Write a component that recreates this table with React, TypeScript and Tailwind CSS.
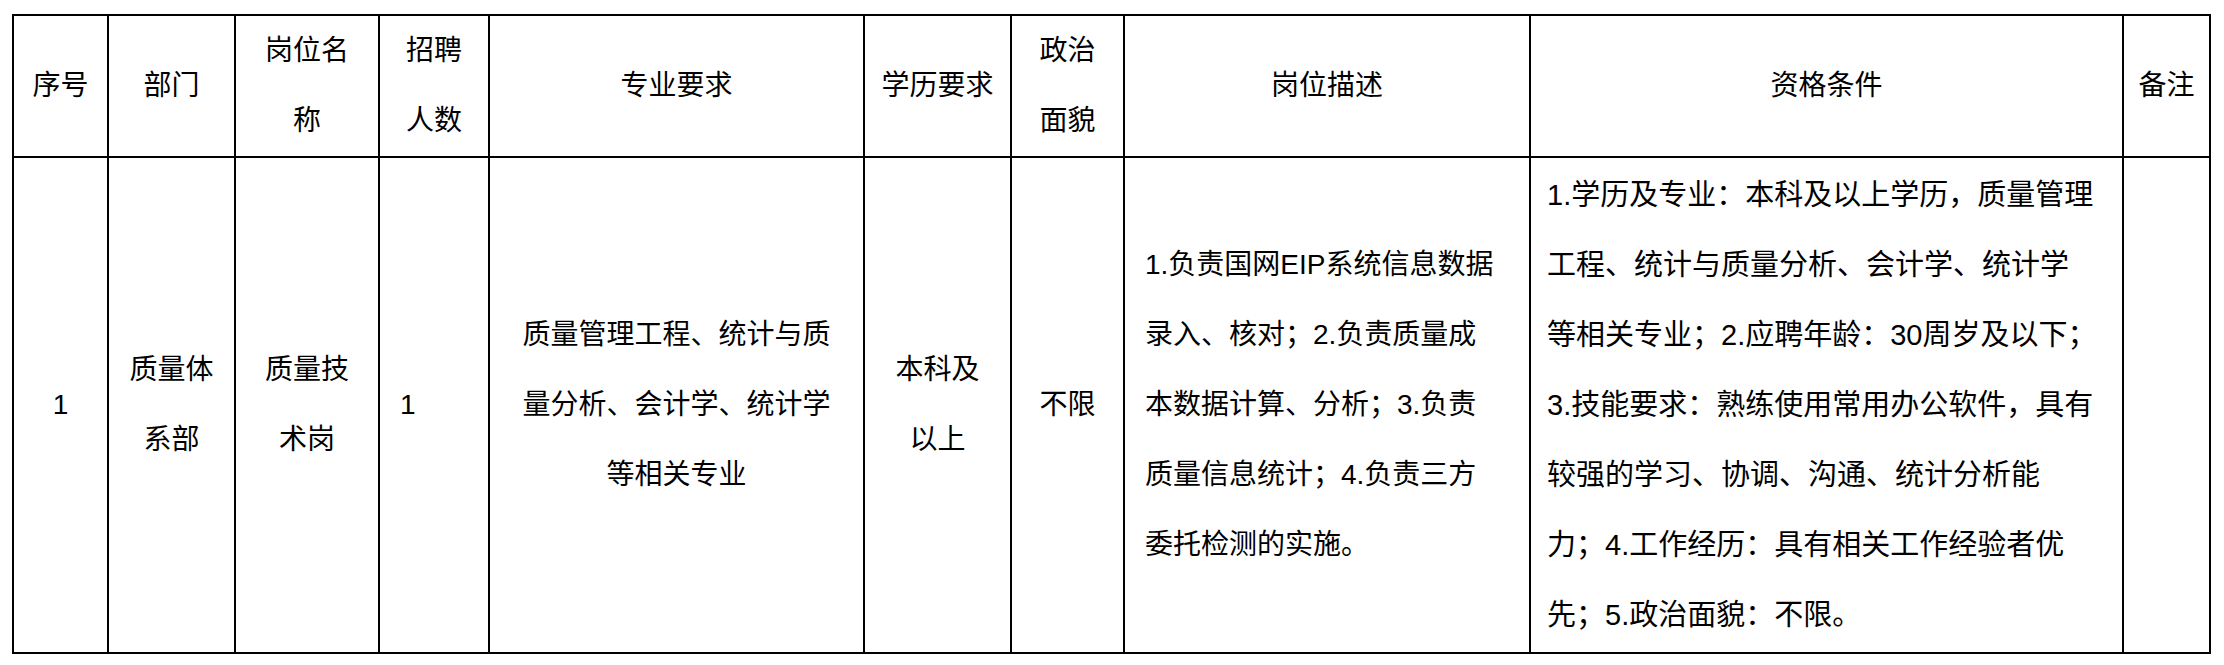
import React from 'react';

const font = { fontFamily: '"Liberation Sans", "Noto Sans CJK SC", sans-serif' };

const duties = [
  '1.负责国网EIP系统信息数据',
  '录入、核对；2.负责质量成',
  '本数据计算、分析；3.负责',
  '质量信息统计；4.负责三方',
  '委托检测的实施。',
];

const requirements = [
  '1.学历及专业：本科及以上学历，质量管理',
  '工程、统计与质量分析、会计学、统计学',
  '等相关专业；2.应聘年龄：30周岁及以下；',
  '3.技能要求：熟练使用常用办公软件，具有',
  '较强的学习、协调、沟通、统计分析能',
  '力；4.工作经历：具有相关工作经验者优',
  '先；5.政治面貌：不限。',
];

const Lines = ({ lines }: { lines: string[] }) => (
  <>
    {lines.map((l, i) => (
      <div key={i} className="whitespace-nowrap">{l}</div>
    ))}
  </>
);

const App = () => {
  const cell = 'border-2 border-black p-0 align-middle font-normal';
  return (
    <div className="w-[2224px] h-[665px] bg-white pt-[14px] pl-[12px] text-black" style={font}>
      <table className="table-fixed border-collapse text-[28px] leading-[70px] w-[2197px]">
        <colgroup>
          <col className="w-[95px]" />
          <col className="w-[127px]" />
          <col className="w-[144px]" />
          <col className="w-[110px]" />
          <col className="w-[375px]" />
          <col className="w-[147px]" />
          <col className="w-[113px]" />
          <col className="w-[406px]" />
          <col className="w-[593px]" />
          <col className="w-[87px]" />
        </colgroup>
        <thead>
          <tr className="h-[142px]">
            <th className={`${cell} text-center`}>序号</th>
            <th className={`${cell} text-center`}>部门</th>
            <th className={`${cell} text-center`}><Lines lines={['岗位名', '称']} /></th>
            <th className={`${cell} text-center`}><Lines lines={['招聘', '人数']} /></th>
            <th className={`${cell} text-center`}>专业要求</th>
            <th className={`${cell} text-center`}>学历要求</th>
            <th className={`${cell} text-center`}><Lines lines={['政治', '面貌']} /></th>
            <th className={`${cell} text-center`}>岗位描述</th>
            <th className={`${cell} text-center`}>资格条件</th>
            <th className={`${cell} text-center`}>备注</th>
          </tr>
        </thead>
        <tbody>
          <tr className="h-[496px]">
            <td className={`${cell} text-center`}>1</td>
            <td className={`${cell} text-center`}><Lines lines={['质量体', '系部']} /></td>
            <td className={`${cell} text-center`}><Lines lines={['质量技', '术岗']} /></td>
            <td className={`${cell} pl-5`}>1</td>
            <td className={`${cell} text-center`}>
              <Lines lines={['质量管理工程、统计与质', '量分析、会计学、统计学', '等相关专业']} />
            </td>
            <td className={`${cell} text-center`}><Lines lines={['本科及', '以上']} /></td>
            <td className={`${cell} text-center`}>不限</td>
            <td className={`${cell} pl-5`}><Lines lines={duties} /></td>
            <td className={`${cell} pl-4 text-[29px]`}><Lines lines={requirements} /></td>
            <td className={cell}></td>
          </tr>
        </tbody>
      </table>
    </div>
  );
};

export default App;
